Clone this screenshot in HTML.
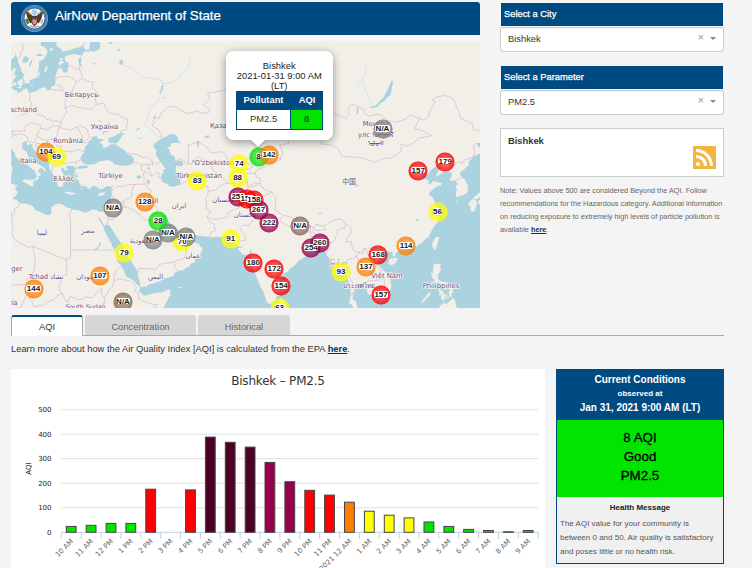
<!DOCTYPE html>
<html><head><meta charset="utf-8"><title>AirNow Department of State</title>
<style>
html,body{margin:0;padding:0}
body{width:752px;height:568px;overflow:hidden;background:#f4f4f4;font-family:"Liberation Sans",Arial,sans-serif;color:#333;position:relative}
.abs{position:absolute}
#hdr{left:11px;top:2px;width:469px;height:33px;background:#004a82;border-radius:3px 3px 0 0}
#hdr .t{left:44px;top:-2.6px;line-height:33px;font-size:13.33px;color:#fff;white-space:nowrap;-webkit-text-stroke:.25px #fff}
#map{left:11px;top:42px;width:469px;height:266px;background:#f2efe9;overflow:hidden}
.ph{left:501px;width:222px;height:23px;background:#004a82;color:#fff;font-size:9.33px;line-height:22.5px;text-indent:3px;white-space:nowrap;-webkit-text-stroke:.25px #fff}
.sel{left:500px;width:224px;height:25px;background:#fff;border:1px solid #ccc;border-radius:3px;box-sizing:border-box;font-size:9.33px;line-height:22px;color:#333;text-indent:7px;box-shadow:inset 0 1px 1px rgba(0,0,0,.06)}
#note{left:500px;top:184px;width:226px;font-size:7.33px;line-height:13px;color:#666;white-space:nowrap}
#note b,#learn b{color:#003366;text-decoration:underline}
.tab{top:315px;height:20px;box-sizing:border-box;font-size:9.33px;line-height:24px;text-align:center;color:#666;background:#d6d6d6;border-radius:3px 3px 0 0}
#learn{left:11px;top:343px;font-size:9.33px;line-height:12px;color:#333;white-space:nowrap}
#chart{left:11px;top:369px;width:534px;height:199px;background:#fff;overflow:hidden;font-family:"DejaVu Sans",Verdana,sans-serif}
.mk{position:absolute;width:20px;height:20px;border-radius:50%}
.ml{position:absolute;width:30px;height:8px;text-align:center;font-size:8px;line-height:8px;font-weight:bold;color:#111;white-space:nowrap}
.ml span{display:inline-block;background:#fff;border-radius:2px;padding:0 .5px;height:6.9px;line-height:7.6px;color:#1a1a1a}
#cc{left:556px;top:369px;width:168px;height:195px;box-sizing:border-box;border:1px solid #004a82;background:#f0f0f0}
</style></head><body>
<div id="hdr" class="abs"><svg class="abs" style="left:9px;top:2px" width="29" height="29" viewBox="-14.5 -14.5 29 29">
<circle r="13.5" fill="#b5b46a"/><circle r="12.9" fill="#2f6cb3"/><circle r="11.6" fill="none" stroke="#6f9bd0" stroke-width="1.4" stroke-dasharray="1 .8"/><circle r="10" fill="#fff"/><g transform="scale(1.12)">
<circle cx="0" cy="-5.6" r="2.6" fill="#a9d3e6"/>
<path d="M-1.5,-1 C-3,-5 -6,-6.5 -7.5,-5.5 C-7,-2 -6,2 -3.5,4.5 L-1,3 Z" fill="#5a3a17"/>
<path d="M1.5,-1 C3,-5 6,-6.5 7.5,-5.5 C7,-2 6,2 3.5,4.5 L1,3 Z" fill="#5a3a17"/>
<path d="M-2.2,-2.5 L2.2,-2.5 L2.2,5 L0,7 L-2.2,5 Z" fill="#5a3a17"/>
<path d="M-5.5,-6.5 L-4,-3.5 M5.5,-6.5 L4,-3.5" stroke="#c8b44e" stroke-width="1"/>
<path d="M-1.9,0.6 L1.9,0.6 L1.9,4 L0,5.6 L-1.9,4 Z" fill="#f08a8a"/>
<rect x="-1.9" y="-0.6" width="3.8" height="1.4" fill="#2f5fa8"/>
<ellipse cx="-6.6" cy="2.6" rx="1.5" ry="2.6" transform="rotate(-25 -6.6 2.6)" fill="#3f8a3f"/>
<path d="M-4,6.5 Q0,9 4,6.5" stroke="#999" stroke-width="1.2" fill="none"/>
<ellipse cx="6.6" cy="2.6" rx="1" ry="2.2" transform="rotate(25 6.6 2.6)" fill="#bbb"/>
</g></svg><div class="t abs">AirNow Department of State</div></div>
<div id="map" class="abs"><svg class="abs" style="left:0;top:0" width="469" height="266" viewBox="0 0 469 266">
<rect width="469" height="266" fill="#f2efe9"/>
<path d="M-9.0,109.7L-4.4,108.2L-1.8,106.1L1.7,107.9L3.6,110.8L4.3,113.9L6.6,116.4L9.3,118.4L11.2,120.0L13.8,122.2L16.1,122.5L18.4,124.5L19.5,125.5L21.4,127.4L23.7,128.4L24.5,130.9L25.6,133.3L26.0,134.5L24.7,135.2L23.9,137.6L24.1,138.4L25.6,138.5L27.5,136.2L27.3,134.3L29.8,133.3L29.4,131.4L27.1,129.9L27.5,127.9L28.7,126.5L29.8,126.0L32.5,127.2L32.9,128.7L34.4,129.4L34.8,127.9L32.9,125.2L29.1,123.2L25.2,121.2L24.9,120.5L26.0,119.0L23.0,119.0L20.3,117.4L17.6,114.9L16.1,110.8L13.5,108.4L11.6,107.1L11.0,103.9L11.6,102.9L11.2,100.7L14.2,99.4L16.7,99.4L15.7,100.5L16.1,102.3L17.3,103.9L18.8,101.3L21.1,102.9L22.2,106.6L24.9,109.7L27.0,110.8L29.8,113.3L33.2,115.4L35.5,116.4L37.4,118.7L38.6,120.0L38.4,122.0L38.2,125.5L38.6,126.9L40.5,129.9L41.6,131.8L43.3,133.5L44.6,136.4L46.9,136.4L51.5,137.9L47.7,137.2L45.4,138.6L46.5,141.9L46.9,143.8L49.6,145.2L51.1,143.8L52.6,145.4L51.9,141.0L51.1,140.5L53.8,141.2L52.6,138.6L54.5,138.6L55.9,139.8L56.1,137.2L58.0,138.1L56.4,135.2L53.0,133.3L51.9,131.8L53.0,132.3L51.5,130.4L50.3,128.4L50.5,126.0L51.7,125.5L53.4,127.2L53.2,128.7L54.5,127.4L55.7,128.7L57.2,127.7L55.3,126.5L54.9,124.7L57.2,123.7L59.9,123.7L62.9,124.2L63.5,125.5L66.3,125.5L64.0,128.2L64.0,128.7L63.7,130.9L66.7,130.9L65.9,131.8L66.7,133.8L66.3,134.8L67.5,136.0L64.8,135.0L64.4,136.9L67.1,137.9L68.0,138.4L67.8,140.0L68.6,141.2L68.6,142.9L72.0,142.6L68.6,144.5L71.3,144.0L72.0,143.8L74.3,144.3L75.1,144.5L77.0,146.6L80.0,146.4L80.8,143.8L83.8,144.0L86.1,145.2L88.4,147.1L89.3,147.4L93.3,146.1L96.0,143.8L98.6,144.7L99.8,145.0L101.3,143.3L102.1,143.3L102.1,144.7L100.5,146.1L100.9,147.5L100.4,149.9L100.9,152.6L100.5,154.7L99.4,157.2L98.3,160.8L97.5,162.1L96.6,165.5L95.4,167.9L94.5,168.8L92.9,169.7L90.3,169.7L88.4,169.9L87.2,168.9L85.3,167.9L82.7,167.5L80.0,168.1L78.1,169.2L74.7,170.8L72.0,169.9L68.0,168.6L63.3,167.7L60.2,167.7L59.5,165.9L55.5,165.4L52.2,163.0L50.5,162.3L46.5,161.6L42.7,163.3L40.7,165.3L40.3,168.8L40.8,170.8L38.9,172.7L37.4,173.3L33.6,172.1L27.5,169.2L23.7,167.9L22.4,164.4L18.8,162.8L14.6,161.7L10.4,161.6L8.1,160.6L6.6,159.0L5.9,157.6L2.8,157.2L2.4,155.4L5.3,153.3L6.6,151.2L6.4,149.9L5.5,148.5L4.7,147.5L4.3,145.7L6.6,143.6L6.4,142.6L3.8,143.8L3.2,141.9L1.9,141.4L-1.4,142.6L-3.7,143.1L-9.0,142.9Z M65.9,126.2L68.2,124.0L70.9,123.4L74.7,123.5L78.1,124.7L74.7,126.2L70.9,126.6L68.6,126.9Z M75.1,122.5L71.6,121.0L70.9,118.4L69.0,115.9L70.5,114.9L70.7,112.3L73.2,111.3L73.2,109.2L73.4,107.1L74.3,104.5L77.3,101.8L77.2,99.7L79.3,98.3L81.3,94.8L84.2,94.2L85.7,94.2L86.9,94.8L85.3,95.9L89.1,97.0L92.2,97.0L92.2,98.3L88.0,101.0L89.9,101.8L91.2,101.8L92.0,103.7L91.4,105.3L92.8,106.1L94.3,105.5L97.9,103.9L99.0,102.6L103.0,102.3L103.2,100.7L99.0,101.3L96.7,97.0L98.6,95.9L104.4,93.4L107.2,91.8L112.3,90.9L113.9,91.5L110.8,93.7L109.3,97.0L107.8,99.1L106.6,101.0L104.0,101.0L103.8,102.3L106.3,103.4L108.2,104.5L109.7,106.1L112.9,107.6L115.4,110.2L117.7,112.8L120.3,113.3L122.4,116.4L122.8,117.7L122.6,120.2L120.3,122.0L118.4,123.2L115.4,123.5L110.4,123.7L108.5,123.2L105.1,122.5L102.6,122.0L101.7,120.0L101.1,119.8L98.1,118.2L93.7,118.5L92.8,118.5L87.6,119.7L85.3,121.2L83.8,122.0L79.6,122.7L77.0,122.6Z M145.8,99.7L148.8,97.5L151.9,95.9L155.3,94.2L159.1,92.3L162.2,92.0L164.1,92.6L166.3,94.8L166.7,97.5L169.8,101.3L164.1,100.7L160.3,101.3L159.1,105.0L155.5,105.0L158.0,107.1L158.9,110.0L159.5,112.6L162.9,113.9L164.1,116.4L163.9,119.5L166.0,119.0L170.5,118.4L172.4,121.0L170.9,124.5L167.1,124.0L165.6,123.0L165.0,124.0L164.8,128.4L166.3,131.4L168.2,132.8L169.4,137.2L169.2,141.2L169.8,143.1L166.0,143.6L164.6,144.3L162.2,144.7L159.9,144.5L158.4,144.0L155.7,141.9L152.5,140.6L150.7,139.3L150.3,136.0L150.2,134.5L151.1,131.8L152.3,131.4L152.3,127.9L154.0,126.9L156.1,126.7L153.0,125.2L151.1,122.0L148.1,118.2L145.2,113.4L144.9,110.2L146.0,108.2L143.9,106.6L142.4,104.5L143.1,101.8Z M29.8,-2.6L45.8,-2.6L45.4,2.1L45.8,4.4L48.8,5.9L51.5,8.2L51.7,10.3L53.8,9.3L57.2,8.6L59.3,7.8L62.1,6.7L66.9,5.5L69.7,5.1L73.5,3.6L72.8,5.9L74.7,7.6L77.7,7.8L79.3,9.3L77.3,9.7L74.7,9.3L72.4,10.8L71.1,13.0L67.1,13.0L63.3,11.9L58.5,13.0L55.9,13.4L53.8,14.9L53.8,16.7L54.2,19.3L57.6,20.9L57.0,24.3L56.8,28.8L55.9,30.2L54.2,30.8L52.4,29.9L50.3,26.4L50.3,25.3L47.7,26.4L46.4,27.8L45.8,30.6L44.3,34.0L44.5,37.4L44.6,39.4L44.1,42.1L42.4,44.4L40.3,44.4L40.1,46.3L38.2,48.3L35.5,48.1L34.9,47.0L35.9,46.6L34.4,45.3L31.0,45.7L28.5,46.8L25.6,48.9L23.5,49.4L20.7,50.5L18.6,51.0L17.3,49.5L16.7,48.6L16.3,46.6L15.5,46.1L14.2,47.3L11.9,47.4L10.4,49.4L8.5,49.9L7.9,50.8L5.9,50.7L6.6,47.9L5.1,48.6L3.2,47.9L2.4,47.3L0.5,45.3L2.0,44.7L1.5,42.1L0.5,40.7L2.0,39.4L3.2,36.4L5.9,34.3L3.6,33.3L3.6,30.6L4.5,27.4L4.7,25.5L2.2,26.4L0.1,29.5L-2.9,29.7L-4.4,32.6L-4.8,37.4L-4.8,40.4L-3.5,40.9L-2.7,44.7L-2.9,48.6L-1.9,49.9L-1.8,51.1L-3.0,53.4L-4.0,53.1L-5.2,52.4L-12.8,52.4L-12.8,23.6L-8.8,23.6L-5.2,22.5L-2.1,20.3L0.1,17.4L2.6,16.0L4.3,13.4L4.7,9.7L5.1,13.4L6.0,14.9L6.9,16.9L7.2,21.1L9.7,25.7L10.4,28.5L11.0,29.9L13.3,33.0L11.7,35.4L12.7,37.0L13.8,40.1L13.2,41.5L14.4,41.6L16.9,41.3L19.0,40.4L18.8,37.9L20.3,37.4L23.7,36.4L25.2,36.0L26.6,33.0L27.0,28.7L27.7,25.3L28.3,22.1L27.5,19.3L29.1,18.9L31.3,17.8L32.7,17.1L34.4,14.1L36.3,11.2L36.3,8.2L34.4,6.3L32.7,4.4L29.8,3.8Z M150.7,270.3L153.0,265.0L154.0,262.7L156.1,258.9L157.8,255.1L159.9,253.4L158.9,250.5L159.4,248.1L157.4,247.6L151.5,250.2L146.9,250.8L143.9,250.7L140.5,252.1L135.5,253.5L131.7,253.2L129.7,250.0L128.5,249.0L126.4,249.0L129.1,247.6L129.1,245.6L127.0,243.6L124.1,240.5L121.1,237.4L118.8,236.2L116.5,235.5L114.4,233.5L113.5,230.0L111.2,224.9L110.4,223.3L107.8,221.3L106.4,219.7L105.9,217.7L105.9,212.1L104.7,208.0L100.9,204.2L100.5,200.3L99.4,199.9L97.1,195.4L94.8,191.1L93.5,188.4L93.1,186.3L91.8,183.3L90.3,181.6L88.6,178.4L87.4,176.2L88.2,174.7L88.8,176.2L90.3,178.6L92.2,182.1L94.7,184.3L94.8,183.5L95.7,181.0L96.3,178.8L97.4,176.5L97.2,177.6L96.6,181.0L95.9,182.9L98.3,183.1L100.2,185.9L103.0,190.6L106.1,195.5L109.1,199.5L112.7,204.8L113.3,210.1L117.5,215.5L120.6,219.6L122.6,223.3L126.2,228.4L127.2,231.9L126.8,234.7L127.7,236.6L128.7,240.1L128.9,242.4L129.6,245.0L131.7,245.1L135.5,244.5L138.2,242.2L142.0,241.7L146.6,239.7L148.3,239.7L151.2,237.7L153.0,236.8L159.3,235.1L162.9,233.3L162.9,231.2L166.3,229.4L170.1,228.0L172.4,228.2L174.3,226.2L178.5,224.3L179.6,221.7L184.2,220.1L183.8,217.5L184.2,214.9L186.5,214.5L187.8,212.7L190.3,210.5L191.9,205.9L190.8,205.7L188.4,202.9L187.3,201.4L184.6,201.1L180.2,198.3L178.7,195.2L178.4,193.1L179.3,190.3L178.3,190.7L177.2,192.4L174.6,194.6L171.3,197.8L167.9,199.2L164.4,199.0L161.2,199.7L159.5,197.4L160.6,195.7L160.4,194.5L160.4,192.8L159.1,190.9L157.5,194.1L157.4,196.8L155.4,193.0L155.1,189.7L153.4,187.3L150.4,184.8L148.8,181.4L146.9,177.3L146.0,177.2L147.3,176.2L149.2,174.9L151.5,172.5L155.1,174.3L157.7,179.0L159.5,183.7L162.3,183.8L164.4,185.4L167.5,188.4L173.1,189.2L175.8,188.6L178.4,186.6L181.0,187.3L181.6,189.5L184.1,193.0L188.8,194.1L194.9,194.6L201.4,195.2L205.8,194.7L210.2,194.9L215.4,193.8L217.3,194.1L219.1,196.5L220.7,199.7L223.0,201.1L224.9,201.5L225.7,203.1L228.1,204.7L231.8,204.2L230.8,205.8L227.1,206.1L226.7,207.0L229.1,209.5L232.0,212.5L234.3,213.3L236.7,212.5L238.6,211.3L239.0,209.0L240.3,206.8L240.3,209.3L240.7,211.7L241.3,214.5L241.3,220.3L242.0,224.1L243.2,228.0L245.1,234.1L246.2,236.6L249.0,244.1L252.6,250.3L254.3,255.3L255.6,259.4L257.0,261.0L259.3,262.4L261.6,259.7L265.2,257.9L265.0,256.1L266.0,254.0L268.1,254.0L268.1,252.2L268.1,247.7L269.8,243.3L269.2,240.5L269.2,238.0L269.0,234.3L272.1,232.9L273.0,231.3L277.4,229.6L277.3,228.2L281.2,225.2L284.4,222.7L287.4,219.0L290.8,216.9L294.0,215.0L295.1,212.9L295.3,210.3L297.2,209.6L299.4,209.5L302.9,209.3L305.1,208.8L307.8,208.4L308.6,207.6L309.7,206.4L311.2,205.8L313.5,206.8L314.2,210.3L315.4,212.7L317.7,215.5L320.2,218.4L321.9,220.7L323.2,222.3L324.1,225.6L322.6,231.9L324.5,232.5L326.4,232.9L328.3,231.9L330.6,230.0L333.1,226.6L335.6,230.0L336.3,234.9L337.5,239.5L337.9,241.7L339.4,245.7L339.4,249.4L339.8,253.2L339.2,255.1L338.4,258.9L338.2,263.1L338.8,262.2L339.4,261.4L340.5,262.6L342.0,265.0L343.6,267.3L344.7,270.3Z M346.6,270.3L347.0,265.8L345.7,262.7L345.3,260.8L344.5,258.9L344.2,258.2L342.2,258.2L341.8,256.5L341.8,253.2L343.0,250.5L343.9,248.2L344.6,245.3L344.9,243.0L346.6,241.7L348.3,242.2L348.0,243.9L348.1,245.0L349.6,245.0L351.9,245.1L354.4,247.1L355.9,249.0L356.5,250.9L358.0,252.7L360.7,253.0L361.8,253.7L364.0,255.1L363.0,258.2L362.7,260.5L364.9,259.9L366.6,258.2L368.3,257.4L369.8,255.9L370.6,254.0L371.6,253.8L375.5,251.6L378.5,250.1L378.9,249.2L379.7,247.8L379.7,246.5L380.6,244.0L380.1,243.2L379.8,240.6L379.3,237.4L378.5,235.3L376.0,231.6L374.0,229.8L369.9,226.1L369.2,224.3L367.3,222.7L366.6,221.1L367.1,217.1L369.6,214.9L370.6,212.9L371.7,212.3L375.0,210.1L377.4,209.0L379.3,210.3L381.2,209.5L381.8,210.9L381.6,213.3L383.3,215.1L384.8,214.1L384.3,212.9L384.3,211.3L385.8,210.5L387.7,210.1L390.1,209.0L393.4,208.6L396.2,207.4L396.4,205.0L398.7,206.8L400.2,205.4L403.1,205.0L405.9,204.6L408.2,202.5L410.5,201.1L413.5,198.0L415.8,196.1L417.7,194.9L419.2,191.5L420.4,189.0L421.9,186.5L424.0,183.3L426.8,180.1L428.0,178.0L428.7,174.9L426.8,174.3L424.9,173.2L424.2,172.7L426.1,171.2L428.3,170.6L426.5,168.4L428.0,167.0L426.1,164.4L424.2,162.8L424.2,161.2L422.7,157.9L421.9,155.4L418.7,153.3L417.7,151.9L419.0,150.3L422.1,147.3L424.2,145.4L426.8,144.0L429.9,143.6L431.0,141.0L428.7,140.5L426.1,140.3L423.6,139.0L421.9,139.8L420.4,141.2L418.1,142.1L417.0,141.4L418.1,139.3L415.4,137.6L413.2,136.7L412.0,135.2L412.2,133.3L413.3,132.3L416.6,132.6L419.2,128.8L424.0,125.0L424.9,124.2L428.0,124.0L428.9,125.2L428.6,127.2L426.5,130.4L425.7,132.3L425.1,134.7L426.8,133.8L428.4,133.1L432.2,130.1L437.1,129.2L438.6,130.4L440.5,130.6L440.5,134.8L438.4,137.6L440.9,139.5L442.4,138.1L444.7,139.5L445.9,140.7L446.8,143.1L444.1,143.8L445.5,146.1L445.7,147.7L445.1,150.3L444.9,153.1L445.6,155.4L448.5,154.2L450.2,153.5L452.7,152.9L455.2,151.7L456.5,149.9L457.1,147.5L456.6,142.9L454.8,139.3L453.5,137.2L449.1,132.6L449.9,129.4L451.9,128.4L455.7,125.1L457.6,123.5L458.0,119.6L459.9,117.2L461.5,116.9L461.8,115.1L464.5,113.3L466.0,112.8L467.5,111.8L477.8,111.8L477.8,270.3Z M358.8,64.7L360.5,66.2L366.9,64.8L369.4,61.2L373.2,59.3L375.9,55.6L378.7,54.3L380.1,50.5L381.2,44.0L382.3,39.4L380.1,39.1L377.8,45.3L375.1,50.5L372.5,55.6L368.7,59.3L364.9,63.3L363.1,63.9Z M243.5,99.7L245.1,97.0L246.6,93.4L249.6,92.9L251.5,94.2L255.3,94.5L258.0,94.0L261.8,93.4L265.6,94.2L264.8,95.9L261.8,95.9L258.4,95.6L255.3,95.9L251.5,95.9L249.6,97.5L248.1,101.3L246.2,102.9L244.3,102.3Z M185.9,99.7L186.9,98.0L188.0,99.1L187.8,102.9L187.1,106.1L186.3,105.0Z M193.3,94.8L195.2,93.4L197.9,93.7L198.7,95.1L196.4,95.9L194.5,95.9Z M254.2,116.4L257.2,114.9L262.2,115.1L261.0,117.2L257.2,117.7Z M125.3,135.2L126.8,133.3L129.8,133.5L130.2,135.7L127.9,136.7Z M135.5,138.6L136.7,136.7L138.6,138.6L138.6,141.9L136.7,142.4Z M135.5,125.5L136.7,125.5L137.8,127.4L136.7,127.4Z M78.1,8.2L78.9,0.5L81.9,-4.2L88.0,-2.6L89.5,4.4L88.0,7.8L84.2,9.3L82.3,9.7Z M95.6,-5.0L98.3,-9.0L103.2,-3.4L100.9,2.1L97.5,1.3Z M67.1,17.1L69.7,16.3L70.5,18.5L69.4,22.1L71.6,24.3L70.5,25.0L68.6,22.8L67.8,20.0Z M11.6,17.1L14.6,13.8L18.0,16.3L16.9,20.0L13.5,20.7L11.6,20.7Z M18.2,25.0L19.0,20.0L20.7,17.4L21.3,19.3L19.5,24.3Z M25.2,12.7L29.1,11.6L32.5,13.4L29.1,14.1L25.2,13.8Z M82.3,21.4L84.2,20.3L84.4,22.5L82.9,22.8Z M107.8,20.0L110.1,17.1L112.3,19.3L111.6,22.8L109.7,22.8Z M106.3,7.4L108.5,6.3L108.9,8.6L107.0,8.9Z M343.2,143.3L345.1,141.9L347.6,143.1L346.6,144.7L344.3,144.5Z M358.8,242.8L360.3,243.2L362.2,245.5L361.1,245.7Z M466.4,101.3L469.4,101.3L469.8,105.0L467.2,105.0Z M88.4,200.3L89.7,200.3L89.5,203.1L87.2,206.8L83.8,208.0L83.4,207.2L87.6,204.4Z M150.0,44.0L152.6,42.7L151.5,48.6L149.2,51.8L148.1,50.5L150.0,47.3Z M181.2,117.9L184.2,117.9L184.2,120.5L181.9,120.5Z M280.8,85.9L283.9,85.3L286.9,87.3L283.1,87.6Z M273.2,96.4L275.9,95.9L276.2,98.0L274.0,98.0Z M315.4,72.0L319.2,72.0L318.8,74.4L315.8,74.1Z M345.5,65.5L347.4,65.5L347.4,72.0L345.8,72.0Z M307.4,171.0L310.5,170.6L310.5,171.9L307.8,171.9Z M405.5,176.7L407.8,177.5L407.1,179.7L405.5,178.8Z M420.4,168.4L422.7,168.4L422.3,170.1L420.8,170.1Z M86.5,77.6L89.5,78.8L91.4,80.2L90.3,80.5L88.0,79.1Z M91.8,89.5L94.8,89.0L97.9,89.0L97.9,90.1L94.8,90.1L91.8,92.0L91.0,91.5Z M124.7,88.4L127.2,85.9L128.7,85.3L128.3,86.7L126.0,89.0Z M125.6,95.1L128.7,95.9L131.4,96.7L131.0,97.2L127.9,96.4L125.6,95.6Z" fill="#aad3df"/>
<path d="M-2.9,119.0L-2.3,115.6L-0.0,113.3L0.7,117.9L-0.4,121.5L-2.1,120.7Z M-4.4,125.5L-3.7,132.3L-1.8,133.8L0.7,132.6L1.7,126.0L-0.6,122.2L-3.7,124.0Z M11.7,139.1L11.9,138.1L15.2,137.2L17.6,138.1L21.4,137.4L23.7,136.8L22.2,140.5L22.6,142.9L21.8,144.5L19.2,143.8L15.9,141.5L12.5,140.3Z M54.0,149.9L56.4,149.6L60.0,150.6L62.3,150.8L64.4,151.0L64.0,152.2L61.4,152.4L58.5,152.5L54.0,151.0Z M87.2,152.6L87.2,151.7L89.5,151.2L89.9,150.6L92.4,150.6L96.0,148.9L93.5,150.8L93.9,152.3L92.2,153.1L89.9,154.1L87.6,153.5Z M69.7,146.8L71.6,145.4L71.3,147.1L70.1,148.0Z M62.7,132.3L64.8,131.5L65.6,133.1L63.7,133.4Z M62.9,135.5L63.8,135.5L63.7,137.2L62.9,136.9Z M6.6,39.4L9.3,37.7L11.2,36.7L12.3,38.1L12.1,40.4L11.2,42.7L10.4,44.4L8.9,43.7L7.0,42.7Z M1.5,41.1L3.6,39.9L5.5,41.4L5.1,43.7L2.8,43.7Z M6.2,45.0L9.7,44.4L10.6,45.7L9.5,46.6L6.2,46.0Z M20.3,42.7L21.1,42.1L22.0,43.4L21.4,44.0L20.3,43.5Z M26.8,35.7L27.3,31.9L29.2,28.1L28.7,31.9L27.3,36.0Z M33.2,28.5L35.5,23.9L36.8,24.3L36.1,27.8L34.0,31.0Z M47.5,21.4L48.8,19.6L51.9,18.9L53.0,20.3L50.7,22.1L48.4,23.9Z M48.3,17.1L50.3,15.8L52.1,17.4L50.3,18.5Z M38.6,7.4L40.5,5.9L42.4,7.0L41.2,8.9L39.3,8.6Z M268.6,255.9L269.6,255.8L271.7,257.9L273.3,260.6L275.1,263.8L275.7,266.5L275.1,268.4L270.9,270.5L269.4,270.2L268.1,266.8L267.6,261.8L268.1,259.1L269.0,256.8L268.4,256.1Z M377.6,219.7L378.7,217.3L379.7,216.5L383.9,215.9L386.3,216.1L386.5,217.5L384.6,220.9L380.8,223.3L377.8,222.1Z M426.7,194.5L428.4,195.7L426.8,199.9L426.1,203.6L424.0,208.4L421.9,205.6L421.1,203.6L421.5,200.7L423.4,197.4L424.6,195.5Z M423.0,221.9L424.6,221.7L429.1,222.1L429.5,222.5L429.1,226.4L430.3,227.6L426.7,232.9L427.0,236.8L429.5,239.3L433.3,240.1L435.6,240.5L435.0,243.0L436.4,245.3L434.5,244.0L431.8,241.7L429.9,241.7L430.6,242.8L427.6,240.1L424.8,241.1L423.0,240.1L423.0,238.6L424.4,237.4L422.9,236.8L422.5,238.0L421.9,236.4L420.4,233.9L420.0,230.4L421.9,231.7L421.9,229.6L422.3,225.8Z M421.9,241.9L424.9,241.7L426.7,244.8L425.3,246.7L423.8,244.8Z M437.1,245.3L440.9,245.3L442.6,250.9L439.8,251.1L438.6,248.2Z M437.3,249.8L439.8,250.1L440.7,254.4L438.8,255.1Z M428.0,247.8L431.8,249.2L432.7,250.5L430.6,253.4L428.4,253.4Z M429.9,255.1L432.2,251.7L434.3,252.1L432.9,258.6L430.6,257.4Z M433.5,257.2L434.5,254.0L436.2,250.3L436.0,253.6L434.3,257.0Z M435.2,255.7L437.1,254.6L438.3,255.9L436.0,256.7Z M410.1,261.2L410.5,259.7L413.2,256.3L416.2,252.8L418.1,249.8L419.6,251.3L418.5,253.6L415.8,256.3L413.2,258.9L411.6,260.8Z M432.7,245.3L435.0,246.5L436.2,247.8L434.1,247.5Z M428.0,266.9L429.1,263.1L431.4,262.4L433.7,260.1L435.2,262.4L437.1,260.5L439.0,258.9L441.7,255.9L444.0,257.8L444.7,262.0L445.9,265.4L444.3,270.3L428.4,270.3Z M457.6,161.2L458.8,159.0L462.2,157.0L465.3,158.5L466.0,161.2L464.1,168.4L461.5,170.1L459.6,168.8L459.6,164.4L457.6,163.0Z M462.2,156.7L462.6,154.9L465.3,153.5L468.7,150.3L477.8,149.4L477.8,154.9L468.3,155.4L466.4,157.2L463.7,157.0Z M466.4,161.2L468.3,158.1L470.2,156.7L477.8,155.8L477.8,159.0L470.2,162.6L468.7,162.1Z M444.1,159.9L445.5,158.8L447.2,159.2L445.9,160.3Z M455.7,156.0L456.7,153.5L456.9,155.4Z M167.1,245.3L169.8,244.8L171.9,245.3L169.0,246.3Z M156.3,190.7L156.8,190.5L156.8,192.2L156.5,192.2Z M174.7,189.0L178.1,187.6L178.5,187.8L177.0,188.8Z M187.3,213.7L188.6,213.3L187.8,215.3Z" fill="#f2efe9"/>
<path d="M18.6,51.1L19.2,55.0L18.0,57.8L20.1,59.6L20.5,62.7L19.9,64.2L21.4,67.3L20.7,69.8 M10.4,73.2L11.9,72.6L15.7,70.9L20.7,69.8L23.0,70.3L26.4,71.2L28.7,73.8L31.7,73.2L34.9,75.6L36.1,77.9L38.6,77.6L40.8,79.6L44.3,78.5L50.2,80.3 M50.2,80.3L50.7,77.3L54.2,72.6L56.1,70.0L54.2,66.1L54.2,62.4L52.6,61.2L55.3,58.7L53.8,50.8L51.1,48.3L39.7,47.6 M53.8,50.8L57.2,51.1L61.4,49.2L62.5,45.0L65.6,39.6L71.5,36.4L76.2,39.1L81.9,40.1L81.5,45.3L88.8,54.0L84.2,55.6L85.3,62.4L80.8,67.3L75.8,66.7L67.8,65.5L60.6,63.3L54.2,66.1 M44.5,36.9L48.1,34.7L59.1,34.7L65.6,39.6 M51.1,48.3L51.1,44.7L48.1,43.4L45.4,42.4 M57.0,24.5L60.6,23.6L65.2,27.1L68.4,26.7L69.0,21.4L68.8,17.1L71.1,13.0 M68.4,26.7L70.3,31.6L71.5,36.4 M85.3,62.4L92.9,60.9L95.2,67.6L99.0,71.5L106.8,72.3L112.5,76.2L117.1,77.3L115.8,83.1L115.4,87.3L110.1,89.0L109.7,91.5 M50.2,80.3L48.6,84.2L51.5,86.5L59.1,88.1L65.6,85.1L69.9,83.9L75.3,86.7L78.9,95.3L71.6,100.5L71.6,94.2L65.6,85.1 M71.6,100.5L77.2,101.0 M48.6,84.2L45.0,95.3L41.4,97.0L45.8,103.9L49.8,104.5L50.7,107.1L51.7,108.9 M51.7,108.9L61.0,110.0L67.1,107.4L73.0,109.5 M51.7,108.9L49.4,116.7L51.9,121.7L57.6,121.0L64.6,120.0L65.6,121.7L64.6,123.7 M64.6,120.0L69.0,118.4L70.9,118.4 M16.5,99.7L22.6,100.5L26.8,94.5L25.6,92.9L29.6,86.5L28.9,83.1L21.4,80.8L16.9,82.2L12.9,85.9L13.8,89.3L4.1,89.0L0.9,89.3L0.5,91.8L4.1,92.9L10.8,91.8L16.5,94.8L16.5,99.7 M29.6,86.5L35.9,87.6L42.4,83.6L48.6,84.2 M25.6,92.9L26.8,94.5L31.7,97.8L36.3,98.0L41.4,97.0 M36.3,98.0L36.7,103.7L38.2,103.4L37.0,106.6L38.9,112.3L34.6,115.9 M24.3,101.8L25.2,104.5L31.3,113.3L34.6,115.9 M24.3,101.8L28.7,101.5L36.7,103.7 M38.9,112.3L41.8,114.1L42.7,119.0L42.2,120.7L40.5,129.9 M42.7,119.0L49.4,116.7 M42.2,123.5L44.3,124.2L51.5,121.7L51.9,121.7 M0.3,45.3L-2.9,44.7 M7.9,16.3L9.3,14.1L9.7,10.1L11.9,8.2L12.3,5.1L11.0,1.3 M70.1,4.8L74.7,-0.3L78.5,-5.8 M-3.7,88.7L0.9,89.3 M-3.7,95.1L-0.2,94.8L4.1,92.9 M60.0,167.3L58.3,173.6L59.5,177.7L59.5,208.0L104.7,208.0 M59.5,208.0L59.5,216.1L55.7,216.1L55.7,218.1L21.4,204.0L18.4,205.6L9.9,201.8L3.6,197.4L0.1,190.7L2.0,187.8L1.5,181.8L0.7,173.5L3.6,170.6L3.6,167.0L8.3,163.7L8.1,160.6 M0.7,173.5L-1.2,165.3L-4.0,163.5L-7.1,157.6 M21.4,204.0L23.3,212.1L24.3,216.5L23.3,228.4L16.1,237.8L16.1,240.9L11.9,243.2L5.1,242.4L-1.4,244.4L-5.9,242.4 M55.7,218.1L55.7,233.1L51.9,233.5L50.0,239.0L48.4,243.6L47.7,245.1L50.0,251.3L51.5,251.7L46.9,253.2L42.4,258.2L36.7,259.7L32.9,263.1L27.5,263.9L23.3,264.6L21.4,260.1L17.6,255.5L23.0,255.1L21.4,251.3L19.9,246.7L18.0,243.6L16.1,240.9 M18.0,243.6L16.9,250.9L13.5,257.4L10.0,264.6L7.4,268.4 M51.5,251.7L54.5,258.9L56.4,260.1L59.5,254.0L65.2,257.0L70.9,257.4L74.7,255.1L81.5,256.1L87.6,248.6L90.7,246.7L90.3,252.4L93.3,257.0L94.1,260.5L89.9,263.5 M56.4,260.1L60.6,265.4L64.8,268.1 M93.3,257.0L94.8,252.8L97.1,251.7L97.9,248.2L101.7,244.8L103.2,238.6L103.0,235.5L105.1,228.0L111.2,224.1 M103.2,238.6L108.5,236.6L112.7,237.4L119.6,239.3L125.6,245.5L123.2,249.4L127.5,251.4L128.9,249.5 M127.5,251.4L127.9,257.0L131.7,258.9L143.1,262.7L146.9,262.7L139.3,270.3 M94.1,260.5L93.7,261.2L89.9,263.5L95.6,267.7L98.6,272.2 M94.7,168.8L97.1,176.7 M99.8,160.1L99.6,163.9L99.4,167.9L97.5,176.4 M97.4,177.3L101.6,178.0L103.2,176.7L104.2,175.1L107.0,174.5L107.7,173.0L105.1,167.9L112.7,165.7L113.5,165.0L112.0,159.6L104.4,164.4L100.4,162.4 M112.0,159.6L120.3,154.9L121.1,149.4L121.8,145.2L125.5,142.4L119.2,142.4L112.7,144.3L105.1,144.5L103.8,146.4L101.9,148.2L100.9,148.0 M97.9,160.8L100.7,159.4L103.6,155.8L101.3,153.8 M125.5,142.4L134.8,142.1L136.7,146.1L140.3,148.5L138.0,153.5L137.2,157.0L139.9,160.8L144.5,163.7L146.4,166.8L145.8,170.1L146.9,172.5L149.0,174.7 M113.5,165.0L118.0,165.9L124.5,169.7L134.4,178.0L141.4,178.4L144.9,174.5L146.9,174.5 M141.4,178.4L144.9,178.8L145.8,180.8L148.5,180.7 M127.2,230.4L128.7,226.4L132.1,226.4L142.0,227.0L145.0,227.6L147.7,223.3L151.1,221.7L162.2,220.1L173.6,216.1L176.0,208.0L174.3,205.2L164.4,204.2L160.6,199.4 M174.3,205.2L176.4,199.0L177.4,196.1L178.7,195.9 M162.2,220.1L166.3,229.4 M157.6,196.8L159.1,197.4 M122.4,120.9L127.2,120.7L129.6,123.0L130.8,125.0L130.2,127.9L134.8,129.9L133.3,131.4L131.9,131.6L133.6,136.7L132.5,138.6L134.8,142.1 M116.5,111.3L126.0,112.3L131.4,115.4L136.3,114.9L140.9,119.0L144.3,122.0L146.6,122.5L149.2,119.2 M140.9,119.0L141.6,123.0L135.5,122.0L129.6,123.0 M135.5,122.0L137.8,124.5L139.3,129.9L141.4,133.9 M134.8,129.9L139.3,133.8L141.4,133.9L146.2,129.9L148.3,131.4L146.9,134.3L150.3,136.0 M169.4,141.2L172.8,140.7L177.4,137.6L181.9,136.9L186.5,139.8L189.9,140.5L194.1,144.5L197.0,144.5L197.1,149.4L196.8,153.1L194.5,156.3L194.5,158.3L196.0,159.0L194.9,164.8L195.8,167.9L199.0,168.4L199.6,169.9L195.9,175.1L199.8,180.7L203.2,182.0L203.2,186.3L205.1,186.7L204.7,188.8L199.6,190.5L198.7,194.9 M197.1,149.4L204.4,148.2L210.8,142.4L217.3,141.2L222.2,141.9L227.9,142.4L231.2,140.3L231.8,138.1L235.7,136.9L236.7,138.6L236.1,144.3L240.5,142.9L243.2,140.7L249.2,141.7 M247.9,142.7L242.0,144.5L236.9,145.7L235.2,147.3L236.7,150.3L234.8,153.5L234.8,156.5L230.6,156.7L230.2,160.8L228.7,161.0L227.9,166.2L223.0,167.5L216.9,170.6L216.7,175.1L208.2,177.1L202.1,177.1L195.9,175.1 M223.8,201.1L225.9,198.6L229.5,199.0L234.4,198.2L234.0,192.8L231.0,189.5L228.7,187.3L232.5,183.1L237.8,183.5L241.6,178.8L245.4,174.5L248.1,169.7L247.7,166.2L250.8,164.4L248.5,162.1L245.8,160.3L245.4,154.5L252.7,154.0L257.2,152.2L260.3,149.9 M249.2,141.7L249.6,142.9L253.4,147.5L260.3,149.9L264.8,155.4L264.5,160.3L264.8,163.9L263.7,167.9L265.6,169.2L272.4,173.6L277.0,174.1L283.5,177.5L288.0,180.5L291.5,183.1L299.4,183.5L302.5,186.1L305.1,182.5L312.8,184.0L319.2,180.1L323.8,178.0L330.2,177.1L334.8,182.2 M272.4,173.6L269.6,176.2L269.0,179.7L273.6,182.2L281.2,185.9L286.5,186.5L290.7,189.0L295.3,189.9L299.4,189.9L299.6,183.5 M302.5,186.1L302.5,187.3L306.1,188.6L314.7,188.0L312.8,184.0 M334.8,182.2L333.3,186.9L330.2,186.1L326.4,188.6L326.1,191.5L324.2,194.9L324.5,197.0L322.3,200.5L319.6,199.7L319.2,204.0L318.5,207.2L316.6,208.1L315.0,210.9L315.4,213.1 M303.1,207.6L301.9,203.1L299.8,198.2L299.4,196.1L300.6,194.9L299.4,192.0L301.0,189.7L304.0,191.5L306.1,192.6L305.9,194.5L314.3,194.9L315.8,196.1L311.2,199.4L311.2,201.9L312.8,204.2L315.4,201.1L316.6,208.1 M334.8,182.2L339.8,184.8L339.8,192.0L335.4,197.0L335.4,200.3L340.5,199.4L339.8,203.1L342.8,204.4L341.7,207.4L345.1,210.3L349.1,209.9L351.4,211.5L352.9,206.4L359.7,206.0L364.9,202.7L370.2,204.4L370.2,208.0L375.0,210.1 M349.1,209.9L345.1,214.7L340.9,216.9L336.3,217.7L334.6,221.9L336.3,225.6L339.4,231.5L337.9,235.1L341.5,240.5L341.7,245.0L343.4,248.2L339.9,253.8 M345.1,214.7L346.8,215.5L346.6,218.1L349.6,217.9L348.5,225.6L352.7,223.3L354.6,224.3L357.6,222.5L362.6,226.0L362.8,230.0L365.8,233.3L366.0,238.4L364.5,238.6L356.1,239.0L354.4,241.3L353.6,241.5L355.7,248.8 M352.9,206.4L356.1,210.1L356.5,212.5L362.2,213.7L360.3,217.7L364.5,221.7L369.6,228.2L373.2,235.8L373.4,237.0L366.0,238.4 M373.4,237.0L373.2,245.9L367.5,248.6L366.8,251.3L364.1,251.5L361.6,253.5 M298.3,79.8L306.7,87.0L310.5,94.2L310.1,101.8L320.0,103.1L327.2,106.6L331.0,114.6L344.7,115.1L351.5,115.9L363.7,120.5L373.2,116.2L380.1,116.2L390.0,109.7L390.1,102.3L396.4,104.2L405.2,99.1L407.8,95.9L419.6,94.2L420.4,93.4L410.9,88.4L404.0,87.0L408.2,75.9 M298.3,79.8L305.5,75.6L315.4,70.3L323.0,71.7L334.4,76.4L338.2,72.0L337.1,66.4L340.9,62.4L353.1,67.3L353.4,71.5L358.8,74.1L365.2,72.3L370.2,72.9L377.0,78.8L385.4,79.9L394.5,77.3L399.1,73.2L408.2,75.9L412.4,77.9L417.7,75.0L418.1,71.5L423.8,59.9L421.1,58.4L425.3,55.0L434.5,53.4L442.1,56.5L449.3,73.5L449.3,76.2L461.1,81.4L462.4,88.1L468.3,88.1L476.7,84.8L470.6,102.3L466.0,101.3L462.6,103.9L463.7,111.3L461.1,116.2 M437.3,128.4L443.6,123.5L447.0,119.5L451.2,121.5L452.3,118.4L457.6,116.2L461.1,116.2 M444.0,139.3L447.4,136.7L452.5,135.2 M249.2,141.7L249.1,136.0L245.1,135.2L244.5,131.1L245.8,128.2L251.9,125.5L256.9,123.5L262.6,121.5L269.6,117.4L269.4,114.4L271.7,112.6L270.2,105.0L268.3,103.4L275.9,101.8L278.1,101.8L277.4,99.9L280.0,90.9L289.6,91.8L290.5,84.2L296.4,80.2L298.3,79.8 M296.4,80.2L292.2,77.9L288.4,77.3L280.0,69.7L269.0,70.3L260.7,55.0L255.3,50.5L247.3,53.7L243.5,50.8L235.2,49.9L234.0,42.1L226.8,41.4L212.4,48.3L200.2,50.5L196.4,50.8L198.7,56.8L192.6,63.0L199.0,67.6L197.9,70.3L190.7,71.7L187.3,68.8L176.2,71.7L171.7,69.1L163.3,64.5L157.6,64.8L149.6,71.5L148.5,75.9L142.8,75.9L144.3,73.2L142.4,78.8L143.3,79.9L141.2,84.2L143.5,85.1L147.3,87.9L150.7,93.4L148.8,94.5L151.5,95.6 M163.9,119.7L169.8,116.7L173.4,119.0L175.3,122.0L177.4,122.0L177.4,102.9L187.3,99.9L196.4,106.1L200.2,110.8L211.2,109.7L215.8,113.6L215.4,116.4L217.3,119.0L217.5,122.5L222.8,122.7L223.4,124.5L226.8,121.7L232.5,118.2L234.4,117.2L243.9,116.2L244.3,113.1L247.0,112.3L252.7,113.9L265.6,114.6L269.6,117.4 M177.4,122.0L181.2,122.0L181.6,119.0L187.3,114.9L192.6,117.4L193.0,121.5L199.8,123.0L202.1,128.4L208.9,133.5L217.3,141.2 M222.2,141.9L223.4,138.1L224.5,137.2L221.9,130.4L225.3,130.4L227.9,127.4L232.5,128.4L232.9,127.2L234.4,127.2L237.1,127.7L242.0,124.5L236.7,121.0L232.5,121.5L234.4,117.2 M244.5,131.1L237.5,131.8L230.6,130.6L227.9,128.4" fill="none" stroke="#b88fb8" stroke-opacity=".55" stroke-width=".7" stroke-linejoin="round"/>
<path d="M152.6,54.3L154.9,55.6L148.8,56.2L144.3,61.8L139.3,65.8L137.1,74.4L133.8,82.5L139.3,87.0L143.9,91.5L147.1,95.6 M151.9,41.7L156.5,41.4L163.3,39.4L169.4,36.0L169.8,32.6L175.5,27.1L178.1,23.6L179.3,16.3 M112.3,22.8L119.9,26.4L124.1,27.8L128.7,33.3L131.7,35.4L139.3,36.7L145.0,36.7L151.1,38.7L151.5,42.7 M361.1,61.2L358.4,57.5L356.5,53.1L354.6,47.9L352.3,42.7L351.2,36.7L353.4,33.3L354.6,28.5L355.0,23.6 M351.2,36.7L347.7,40.1L345.8,44.0" fill="none" stroke="#aad3df" stroke-opacity=".55" stroke-width=".8" stroke-linejoin="round"/>
<g font-family="DejaVu Sans, Noto Sans CJK SC, sans-serif" fill="#6b5079" stroke="#f7f4f0" stroke-width="1.6" paint-order="stroke" stroke-linejoin="round">
<text x="70.5" y="54.7" font-size="6.8" text-anchor="middle">Беларусь</text>
<text x="25.8" y="70.2" font-size="6.8" text-anchor="end">Deutschland</text>
<text x="93.5" y="87.0" font-size="6.8" text-anchor="middle">Україна</text>
<text x="57.0" y="100.9" font-size="6.8" text-anchor="middle">România</text>
<text x="17.3" y="121.2" font-size="6.8" text-anchor="middle">Italia</text>
<text x="53.0" y="139.4" font-size="6.8" text-anchor="middle">Ελλάς</text>
<text x="99.5" y="135.7" font-size="6.8" text-anchor="middle">Türkiye</text>
<text x="203.5" y="123.2" font-size="6.8" text-anchor="middle">O'zbekiston</text>
<text x="188.0" y="135.9" font-size="6.8" text-anchor="middle">Türkmenistan</text>
<text x="168.0" y="166.4" font-size="6.8" text-anchor="middle">ایران</text>
<text x="138.0" y="161.4" font-size="6.8" text-anchor="middle">العراق</text>
<text x="131.5" y="200.9" font-size="6.8" text-anchor="middle">السعودية</text>
<text x="77.0" y="190.9" font-size="6.8" text-anchor="middle">مصر</text>
<text x="31.0" y="192.7" font-size="6.8" text-anchor="middle">ليبيا</text>
<text x="144.5" y="236.9" font-size="6.8" text-anchor="middle">اليمن</text>
<text x="182.0" y="216.4" font-size="6.8" text-anchor="middle">عمان</text>
<text x="215.0" y="160.4" font-size="6.8" text-anchor="middle">افغانستان</text>
<text x="234.0" y="175.4" font-size="6.8" text-anchor="middle">پاکستان</text>
<text x="35.0" y="236.7" font-size="6.8" text-anchor="middle">Tchad تشاد</text>
<text x="77.0" y="236.9" font-size="6.8" text-anchor="middle">السودان</text>
<text x="74.5" y="267.0" font-size="6.3" text-anchor="middle">South Sudan</text>
<text x="11.5" y="228.7" font-size="6.8" text-anchor="end">Niger</text>
<text x="6.5" y="262.7" font-size="6.8" text-anchor="end">Nigeria</text>
<text x="338.0" y="142.4" font-size="6.8" text-anchor="middle" font-family="Liberation Sans, Noto Sans CJK SC, sans-serif">中国</text>
<text x="376.0" y="236.2" font-size="6.8" text-anchor="middle">Việt Nam</text>
<text x="348.0" y="246.3" font-size="6.8" text-anchor="middle" textLength="32" lengthAdjust="spacingAndGlyphs">ประเทศไทย</text>
<text x="430.0" y="245.7" font-size="6.8" text-anchor="middle">Philippines</text>
<text x="328.0" y="223.2" font-size="6.2" text-anchor="middle" textLength="18" lengthAdjust="spacingAndGlyphs">မြန်မာ</text>
<text x="365.0" y="83.8" font-size="6.8" text-anchor="middle">Монгол</text>
<text x="365.0" y="94.6" font-size="6.8" text-anchor="middle" textLength="36" lengthAdjust="spacingAndGlyphs">улс ᠮᠣᠩᠭᠣᠯ</text>
<text x="365.0" y="104.2" font-size="6.8" text-anchor="middle" textLength="16" lengthAdjust="spacingAndGlyphs">ᠤᠯᠤᠰ</text>
<text x="217.5" y="86.4" font-size="6.8" text-anchor="middle">Қазақстан</text>
</g>
</svg>
<div class="mk" style="left:25.0px;top:99.5px;background:radial-gradient(circle closest-side,rgba(255,126,0,.63) 45%,rgba(255,126,0,.8) 86%,rgba(255,126,0,.78) 92%,rgba(255,126,0,0) 100%)"></div>
<div class="mk" style="left:35.6px;top:105.1px;background:radial-gradient(circle closest-side,rgba(255,255,0,.63) 45%,rgba(255,255,0,.8) 86%,rgba(255,255,0,.78) 92%,rgba(255,255,0,0) 100%)"></div>
<div class="mk" style="left:91.8px;top:155.8px;background:radial-gradient(circle closest-side,rgba(128,128,128,.63) 45%,rgba(128,128,128,.8) 86%,rgba(128,128,128,.78) 92%,rgba(128,128,128,0) 100%)"></div>
<div class="mk" style="left:161.3px;top:190.0px;background:radial-gradient(circle closest-side,rgba(255,255,0,.63) 45%,rgba(255,255,0,.8) 86%,rgba(255,255,0,.78) 92%,rgba(255,255,0,0) 100%)"></div>
<div class="mk" style="left:165.3px;top:185.0px;background:radial-gradient(circle closest-side,rgba(128,128,128,.63) 45%,rgba(128,128,128,.8) 86%,rgba(128,128,128,.78) 92%,rgba(128,128,128,0) 100%)"></div>
<div class="mk" style="left:132.0px;top:187.5px;background:radial-gradient(circle closest-side,rgba(128,128,128,.63) 45%,rgba(128,128,128,.8) 86%,rgba(128,128,128,.78) 92%,rgba(128,128,128,0) 100%)"></div>
<div class="mk" style="left:146.9px;top:181.2px;background:radial-gradient(circle closest-side,rgba(128,128,128,.63) 45%,rgba(128,128,128,.8) 86%,rgba(128,128,128,.78) 92%,rgba(128,128,128,0) 100%)"></div>
<div class="mk" style="left:137.3px;top:168.5px;background:radial-gradient(circle closest-side,rgba(0,228,0,.63) 45%,rgba(0,228,0,.8) 86%,rgba(0,228,0,.78) 92%,rgba(0,228,0,0) 100%)"></div>
<div class="mk" style="left:123.7px;top:150.2px;background:radial-gradient(circle closest-side,rgba(255,126,0,.63) 45%,rgba(255,126,0,.8) 86%,rgba(255,126,0,.78) 92%,rgba(255,126,0,0) 100%)"></div>
<div class="mk" style="left:103.3px;top:200.5px;background:radial-gradient(circle closest-side,rgba(255,255,0,.63) 45%,rgba(255,255,0,.8) 86%,rgba(255,255,0,.78) 92%,rgba(255,255,0,0) 100%)"></div>
<div class="mk" style="left:78.9px;top:224.1px;background:radial-gradient(circle closest-side,rgba(255,126,0,.63) 45%,rgba(255,126,0,.8) 86%,rgba(255,126,0,.78) 92%,rgba(255,126,0,0) 100%)"></div>
<div class="mk" style="left:12.5px;top:237.0px;background:radial-gradient(circle closest-side,rgba(255,126,0,.63) 45%,rgba(255,126,0,.8) 86%,rgba(255,126,0,.78) 92%,rgba(255,126,0,0) 100%)"></div>
<div class="mk" style="left:102.0px;top:249.5px;background:radial-gradient(circle closest-side,rgba(140,104,70,.63) 45%,rgba(140,104,70,.8) 86%,rgba(140,104,70,.78) 92%,rgba(140,104,70,0) 100%)"></div>
<div class="mk" style="left:176.3px;top:129.1px;background:radial-gradient(circle closest-side,rgba(255,255,0,.63) 45%,rgba(255,255,0,.8) 86%,rgba(255,255,0,.78) 92%,rgba(255,255,0,0) 100%)"></div>
<div class="mk" style="left:218.2px;top:112.0px;background:radial-gradient(circle closest-side,rgba(255,255,0,.63) 45%,rgba(255,255,0,.8) 86%,rgba(255,255,0,.78) 92%,rgba(255,255,0,0) 100%)"></div>
<div class="mk" style="left:216.6px;top:125.7px;background:radial-gradient(circle closest-side,rgba(255,255,0,.63) 45%,rgba(255,255,0,.8) 86%,rgba(255,255,0,.78) 92%,rgba(255,255,0,0) 100%)"></div>
<div class="mk" style="left:209.8px;top:186.7px;background:radial-gradient(circle closest-side,rgba(255,255,0,.63) 45%,rgba(255,255,0,.8) 86%,rgba(255,255,0,.78) 92%,rgba(255,255,0,0) 100%)"></div>
<div class="mk" style="left:217.1px;top:144.8px;background:radial-gradient(circle closest-side,rgba(153,0,76,.63) 45%,rgba(153,0,76,.8) 86%,rgba(153,0,76,.78) 92%,rgba(153,0,76,0) 100%)"></div>
<div class="mk" style="left:226.2px;top:147.2px;background:radial-gradient(circle closest-side,rgba(255,0,0,.63) 45%,rgba(255,0,0,.8) 86%,rgba(255,0,0,.78) 92%,rgba(255,0,0,0) 100%)"></div>
<div class="mk" style="left:232.9px;top:148.1px;background:radial-gradient(circle closest-side,rgba(255,0,0,.63) 45%,rgba(255,0,0,.8) 86%,rgba(255,0,0,.78) 92%,rgba(255,0,0,0) 100%)"></div>
<div class="mk" style="left:237.5px;top:158.4px;background:radial-gradient(circle closest-side,rgba(153,0,76,.63) 45%,rgba(153,0,76,.8) 86%,rgba(153,0,76,.78) 92%,rgba(153,0,76,0) 100%)"></div>
<div class="mk" style="left:248.1px;top:171.0px;background:radial-gradient(circle closest-side,rgba(153,0,76,.63) 45%,rgba(153,0,76,.8) 86%,rgba(153,0,76,.78) 92%,rgba(153,0,76,0) 100%)"></div>
<div class="mk" style="left:237.5px;top:104.5px;background:radial-gradient(circle closest-side,rgba(0,228,0,.63) 45%,rgba(0,228,0,.8) 86%,rgba(0,228,0,.78) 92%,rgba(0,228,0,0) 100%)"></div>
<div class="mk" style="left:248.1px;top:102.9px;background:radial-gradient(circle closest-side,rgba(255,126,0,.63) 45%,rgba(255,126,0,.8) 86%,rgba(255,126,0,.78) 92%,rgba(255,126,0,0) 100%)"></div>
<div class="mk" style="left:361.5px;top:77.3px;background:radial-gradient(circle closest-side,rgba(128,128,128,.63) 45%,rgba(128,128,128,.8) 86%,rgba(128,128,128,.78) 92%,rgba(128,128,128,0) 100%)"></div>
<div class="mk" style="left:397.2px;top:118.5px;background:radial-gradient(circle closest-side,rgba(255,0,0,.63) 45%,rgba(255,0,0,.8) 86%,rgba(255,0,0,.78) 92%,rgba(255,0,0,0) 100%)"></div>
<div class="mk" style="left:424.3px;top:109.6px;background:radial-gradient(circle closest-side,rgba(255,0,0,.63) 45%,rgba(255,0,0,.8) 86%,rgba(255,0,0,.78) 92%,rgba(255,0,0,0) 100%)"></div>
<div class="mk" style="left:416.5px;top:160.1px;background:radial-gradient(circle closest-side,rgba(255,255,0,.63) 45%,rgba(255,255,0,.8) 86%,rgba(255,255,0,.78) 92%,rgba(255,255,0,0) 100%)"></div>
<div class="mk" style="left:385.1px;top:194.3px;background:radial-gradient(circle closest-side,rgba(255,126,0,.63) 45%,rgba(255,126,0,.8) 86%,rgba(255,126,0,.78) 92%,rgba(255,126,0,0) 100%)"></div>
<div class="mk" style="left:357.3px;top:202.7px;background:radial-gradient(circle closest-side,rgba(255,0,0,.63) 45%,rgba(255,0,0,.8) 86%,rgba(255,0,0,.78) 92%,rgba(255,0,0,0) 100%)"></div>
<div class="mk" style="left:345.0px;top:215.1px;background:radial-gradient(circle closest-side,rgba(255,126,0,.63) 45%,rgba(255,126,0,.8) 86%,rgba(255,126,0,.78) 92%,rgba(255,126,0,0) 100%)"></div>
<div class="mk" style="left:360.1px;top:242.9px;background:radial-gradient(circle closest-side,rgba(255,0,0,.63) 45%,rgba(255,0,0,.8) 86%,rgba(255,0,0,.78) 92%,rgba(255,0,0,0) 100%)"></div>
<div class="mk" style="left:319.9px;top:219.7px;background:radial-gradient(circle closest-side,rgba(255,255,0,.63) 45%,rgba(255,255,0,.8) 86%,rgba(255,255,0,.78) 92%,rgba(255,255,0,0) 100%)"></div>
<div class="mk" style="left:290.3px;top:196.1px;background:radial-gradient(circle closest-side,rgba(153,0,76,.63) 45%,rgba(153,0,76,.8) 86%,rgba(153,0,76,.78) 92%,rgba(153,0,76,0) 100%)"></div>
<div class="mk" style="left:298.8px;top:190.8px;background:radial-gradient(circle closest-side,rgba(153,0,76,.63) 45%,rgba(153,0,76,.8) 86%,rgba(153,0,76,.78) 92%,rgba(153,0,76,0) 100%)"></div>
<div class="mk" style="left:279.1px;top:174.2px;background:radial-gradient(circle closest-side,rgba(142,100,100,.63) 45%,rgba(142,100,100,.8) 86%,rgba(142,100,100,.78) 92%,rgba(142,100,100,0) 100%)"></div>
<div class="mk" style="left:232.2px;top:210.9px;background:radial-gradient(circle closest-side,rgba(255,0,0,.63) 45%,rgba(255,0,0,.8) 86%,rgba(255,0,0,.78) 92%,rgba(255,0,0,0) 100%)"></div>
<div class="mk" style="left:253.3px;top:216.8px;background:radial-gradient(circle closest-side,rgba(255,0,0,.63) 45%,rgba(255,0,0,.8) 86%,rgba(255,0,0,.78) 92%,rgba(255,0,0,0) 100%)"></div>
<div class="mk" style="left:260.3px;top:234.1px;background:radial-gradient(circle closest-side,rgba(255,0,0,.63) 45%,rgba(255,0,0,.8) 86%,rgba(255,0,0,.78) 92%,rgba(255,0,0,0) 100%)"></div>
<div class="mk" style="left:258.6px;top:256.0px;background:radial-gradient(circle closest-side,rgba(255,255,0,.63) 45%,rgba(255,255,0,.8) 86%,rgba(255,255,0,.78) 92%,rgba(255,255,0,0) 100%)"></div>
<div class="ml" style="left:20.0px;top:105.5px"><span>104</span></div>
<div class="ml" style="left:30.6px;top:111.1px"><span>69</span></div>
<div class="ml" style="left:86.8px;top:161.8px"><span>N/A</span></div>
<div class="ml" style="left:156.3px;top:196.0px"><span>70</span></div>
<div class="ml" style="left:160.3px;top:191.0px"><span>N/A</span></div>
<div class="ml" style="left:127.0px;top:193.5px"><span>N/A</span></div>
<div class="ml" style="left:141.9px;top:187.2px"><span>N/A</span></div>
<div class="ml" style="left:132.3px;top:174.5px"><span>28</span></div>
<div class="ml" style="left:118.7px;top:156.2px"><span>128</span></div>
<div class="ml" style="left:98.3px;top:206.5px"><span>79</span></div>
<div class="ml" style="left:73.9px;top:230.1px"><span>107</span></div>
<div class="ml" style="left:7.5px;top:243.0px"><span>144</span></div>
<div class="ml" style="left:97.0px;top:255.5px"><span>N/A</span></div>
<div class="ml" style="left:171.3px;top:135.1px"><span>83</span></div>
<div class="ml" style="left:213.2px;top:118.0px"><span>74</span></div>
<div class="ml" style="left:211.6px;top:131.7px"><span>88</span></div>
<div class="ml" style="left:204.8px;top:192.7px"><span>91</span></div>
<div class="ml" style="left:212.1px;top:150.8px"><span>251</span></div>
<div class="ml" style="left:221.2px;top:153.2px"><span>155</span></div>
<div class="ml" style="left:227.9px;top:154.1px"><span>158</span></div>
<div class="ml" style="left:232.5px;top:164.4px"><span>267</span></div>
<div class="ml" style="left:243.1px;top:177.0px"><span>222</span></div>
<div class="ml" style="left:232.5px;top:110.5px"><span>8</span></div>
<div class="ml" style="left:243.1px;top:108.9px"><span>142</span></div>
<div class="ml" style="left:356.5px;top:83.3px"><span>N/A</span></div>
<div class="ml" style="left:392.2px;top:124.5px"><span>157</span></div>
<div class="ml" style="left:419.3px;top:115.6px"><span>179</span></div>
<div class="ml" style="left:411.5px;top:166.1px"><span>56</span></div>
<div class="ml" style="left:380.1px;top:200.3px"><span>114</span></div>
<div class="ml" style="left:352.3px;top:208.7px"><span>168</span></div>
<div class="ml" style="left:340.0px;top:221.1px"><span>137</span></div>
<div class="ml" style="left:355.1px;top:248.9px"><span>157</span></div>
<div class="ml" style="left:314.9px;top:225.7px"><span>93</span></div>
<div class="ml" style="left:285.3px;top:202.1px"><span>254</span></div>
<div class="ml" style="left:293.8px;top:196.8px"><span>260</span></div>
<div class="ml" style="left:274.1px;top:180.2px"><span>N/A</span></div>
<div class="ml" style="left:227.2px;top:216.9px"><span>180</span></div>
<div class="ml" style="left:248.3px;top:222.8px"><span>172</span></div>
<div class="ml" style="left:255.3px;top:240.1px"><span>154</span></div>
<div class="ml" style="left:253.6px;top:262.0px"><span>63</span></div>
<div class="abs" style="left:214.5px;top:8.5px;width:107.5px;height:89.5px;background:#fff;border-radius:8px;box-shadow:0 2px 9px rgba(0,0,0,.4)"></div>
<div class="abs" style="left:242.4px;top:93px;width:10px;height:10px;background:#fff;transform:rotate(45deg);box-shadow:1px 1px 3px rgba(0,0,0,.25)"></div>
<div class="abs" style="left:214.5px;top:8.5px;width:107.5px;height:89.5px;background:#fff;border-radius:8px"></div>
<div class="abs" style="left:214.5px;top:19px;width:107.5px;text-align:center;font-size:9.4px;line-height:10.05px;color:#222;white-space:nowrap">Bishkek<br>2021-01-31 9:00 AM<br>(LT)</div>
<div class="abs" style="left:225px;top:49px;width:87px;height:38.5px;background:#004a82"></div>
<div class="abs" style="left:226px;top:67.5px;width:53.2px;height:19px;background:#fff"></div>
<div class="abs" style="left:280.2px;top:67.5px;width:30.8px;height:19px;background:#00e400"></div>
<div class="abs" style="left:225px;top:49px;width:55px;text-align:center;font-size:9.33px;line-height:19px;color:#fff;font-weight:bold">Pollutant</div>
<div class="abs" style="left:280px;top:49px;width:32px;text-align:center;font-size:9.33px;line-height:19px;color:#fff;font-weight:bold">AQI</div>
<div class="abs" style="left:226px;top:67.5px;width:53.2px;text-align:center;font-size:9.33px;line-height:19px;color:#333">PM2.5</div>
<div class="abs" style="left:280.2px;top:67.5px;width:30.8px;text-align:center;font-size:9.33px;line-height:19px;color:#222">8</div></div>

<div class="ph abs" style="top:3px">Select a City</div>
<div class="sel abs" style="top:27px">Bishkek<span class="abs" style="right:19px;top:0;text-indent:0;font-size:11px;color:#999;line-height:18.5px">×</span><span class="abs" style="right:7px;top:8.5px;width:0;height:0;border:3px solid transparent;border-top:3.5px solid #888;border-bottom:none"></span></div>
<div class="ph abs" style="top:66px">Select a Parameter</div>
<div class="sel abs" style="top:90px">PM2.5<span class="abs" style="right:19px;top:0;text-indent:0;font-size:11px;color:#999;line-height:18.5px">×</span><span class="abs" style="right:7px;top:8.5px;width:0;height:0;border:3px solid transparent;border-top:3.5px solid #888;border-bottom:none"></span></div>
<div class="abs" style="left:500px;top:128px;width:224px;height:49px;box-sizing:border-box;background:#fff;border:1px solid #ccc">
 <div class="abs" style="left:7px;top:6.7px;font-size:9.33px;font-weight:bold;color:#333;line-height:10px">Bishkek</div>
 <svg class="abs" style="left:192px;top:17px" width="23" height="23" viewBox="0 0 23 23">
<rect width="23" height="23" fill="#f2b63e"/>
<circle cx="4.9" cy="18" r="2.1" fill="#fff"/>
<path d="M3,10.4 A9.5,9.5 0 0 1 12.5,19.9" stroke="#fff" stroke-width="3" fill="none"/>
<path d="M3,4.5 A15.4,15.4 0 0 1 18.4,19.9" stroke="#fff" stroke-width="3" fill="none"/>
</svg>
</div>
<div id="note" class="abs">Note: Values above 500 are considered Beyond the AQI. Follow<br>recommendations for the Hazardous category. Additional information<br>on reducing exposure to extremely high levels of particle pollution is<br>available <b>here</b>.</div>

<div class="abs" style="left:11px;top:335px;width:713px;height:1px;background:#aaa"></div>
<div class="tab abs" style="left:11px;width:72px;background:#fff;border:1px solid #aaa;border-top:2px solid #004a82;border-bottom:none;height:21px;line-height:21px;color:#333">AQI</div>
<div class="tab abs" style="left:85px;width:111px">Concentration</div>
<div class="tab abs" style="left:198px;width:92px">Historical</div>
<div id="learn" class="abs">Learn more about how the Air Quality Index [AQI] is calculated from the EPA <b>here</b>.</div>

<div id="chart" class="abs"><svg class="abs" style="left:0;top:0" width="534" height="199" viewBox="0 0 534 199" font-family="DejaVu Sans, Verdana, sans-serif">
<text x="267" y="15.8" text-anchor="middle" font-size="12" fill="#333" letter-spacing="-0.2">Bishkek – PM2.5</text>
<path d="M50.3,163.3H527.2" stroke="#c0d0e0" stroke-width="1"/>
<text x="40.5" y="165.9" text-anchor="end" font-size="7" fill="#222">0</text>
<path d="M50.3,138.8H527.2" stroke="#e0e0e0" stroke-width="1"/>
<text x="40.5" y="141.4" text-anchor="end" font-size="7" fill="#222">100</text>
<path d="M50.3,114.2H527.2" stroke="#e0e0e0" stroke-width="1"/>
<text x="40.5" y="116.8" text-anchor="end" font-size="7" fill="#222">200</text>
<path d="M50.3,89.7H527.2" stroke="#e0e0e0" stroke-width="1"/>
<text x="40.5" y="92.3" text-anchor="end" font-size="7" fill="#222">300</text>
<path d="M50.3,65.2H527.2" stroke="#e0e0e0" stroke-width="1"/>
<text x="40.5" y="67.8" text-anchor="end" font-size="7" fill="#222">400</text>
<path d="M50.3,40.7H527.2" stroke="#e0e0e0" stroke-width="1"/>
<text x="40.5" y="43.3" text-anchor="end" font-size="7" fill="#222">500</text>
<path d="M50.3,163.3v6.5M70.2,163.3v6.5M90.0,163.3v6.5M109.9,163.3v6.5M129.8,163.3v6.5M149.7,163.3v6.5M169.5,163.3v6.5M189.4,163.3v6.5M209.3,163.3v6.5M229.1,163.3v6.5M249.0,163.3v6.5M268.9,163.3v6.5M288.7,163.3v6.5M308.6,163.3v6.5M328.5,163.3v6.5M348.4,163.3v6.5M368.2,163.3v6.5M388.1,163.3v6.5M408.0,163.3v6.5M427.8,163.3v6.5M447.7,163.3v6.5M467.6,163.3v6.5M487.4,163.3v6.5M507.3,163.3v6.5M527.2,163.3v6.5" stroke="#c0d0e0" stroke-width="1" fill="none"/>
<text transform="translate(19.5,99.5) rotate(-90)" text-anchor="middle" font-size="7" fill="#111">AQI</text>
<rect x="55.3" y="157.4" width="9.8" height="5.9" fill="#00e400" stroke="#444" stroke-width="1"/>
<rect x="75.2" y="156.3" width="9.8" height="7.0" fill="#00e400" stroke="#444" stroke-width="1"/>
<rect x="95.1" y="154.4" width="9.8" height="8.9" fill="#00e400" stroke="#444" stroke-width="1"/>
<rect x="114.9" y="154.4" width="9.8" height="8.9" fill="#00e400" stroke="#444" stroke-width="1"/>
<rect x="134.8" y="120.2" width="9.8" height="43.1" fill="#ff0000" stroke="#444" stroke-width="1"/>
<rect x="174.6" y="120.9" width="9.8" height="42.4" fill="#ff0000" stroke="#444" stroke-width="1"/>
<rect x="194.4" y="68.1" width="9.8" height="95.2" fill="#4c0026" stroke="#444" stroke-width="1"/>
<rect x="214.3" y="73.3" width="9.8" height="90.0" fill="#4c0026" stroke="#444" stroke-width="1"/>
<rect x="234.2" y="78.1" width="9.8" height="85.2" fill="#4c0026" stroke="#444" stroke-width="1"/>
<rect x="254.0" y="93.4" width="9.8" height="69.9" fill="#99004c" stroke="#444" stroke-width="1"/>
<rect x="273.9" y="112.7" width="9.8" height="50.6" fill="#99004c" stroke="#444" stroke-width="1"/>
<rect x="293.8" y="121.3" width="9.8" height="42.0" fill="#ff0000" stroke="#444" stroke-width="1"/>
<rect x="313.6" y="126.1" width="9.8" height="37.2" fill="#ff0000" stroke="#444" stroke-width="1"/>
<rect x="333.5" y="133.2" width="9.8" height="30.1" fill="#ff7e00" stroke="#444" stroke-width="1"/>
<rect x="353.4" y="142.2" width="9.8" height="21.1" fill="#ffff00" stroke="#444" stroke-width="1"/>
<rect x="373.3" y="146.2" width="9.8" height="17.1" fill="#ffff00" stroke="#444" stroke-width="1"/>
<rect x="393.1" y="148.9" width="9.8" height="14.4" fill="#ffff00" stroke="#444" stroke-width="1"/>
<rect x="413.0" y="153.0" width="9.8" height="10.3" fill="#00e400" stroke="#444" stroke-width="1"/>
<rect x="432.9" y="157.4" width="9.8" height="5.9" fill="#00e400" stroke="#444" stroke-width="1"/>
<rect x="452.7" y="160.4" width="9.8" height="2.9" fill="#00e400" stroke="#444" stroke-width="1"/>
<rect x="472.6" y="161.5" width="9.8" height="1.8" fill="#00e400" stroke="#444" stroke-width="1"/>
<rect x="492.5" y="162.8" width="9.8" height="0.5" fill="#00e400" stroke="#444" stroke-width="1"/>
<rect x="512.3" y="161.5" width="9.8" height="1.8" fill="#00e400" stroke="#444" stroke-width="1"/>
<text transform="translate(62.7,172.8) rotate(-45)" text-anchor="end" font-size="7" fill="#666">10 AM</text>
<text transform="translate(82.6,172.8) rotate(-45)" text-anchor="end" font-size="7" fill="#666">11 AM</text>
<text transform="translate(102.5,172.8) rotate(-45)" text-anchor="end" font-size="7" fill="#666">12 PM</text>
<text transform="translate(122.3,172.8) rotate(-45)" text-anchor="end" font-size="7" fill="#666">1 PM</text>
<text transform="translate(142.2,172.8) rotate(-45)" text-anchor="end" font-size="7" fill="#666">2 PM</text>
<text transform="translate(162.1,172.8) rotate(-45)" text-anchor="end" font-size="7" fill="#666">3 PM</text>
<text transform="translate(182.0,172.8) rotate(-45)" text-anchor="end" font-size="7" fill="#666">4 PM</text>
<text transform="translate(201.8,172.8) rotate(-45)" text-anchor="end" font-size="7" fill="#666">5 PM</text>
<text transform="translate(221.7,172.8) rotate(-45)" text-anchor="end" font-size="7" fill="#666">6 PM</text>
<text transform="translate(241.6,172.8) rotate(-45)" text-anchor="end" font-size="7" fill="#666">7 PM</text>
<text transform="translate(261.4,172.8) rotate(-45)" text-anchor="end" font-size="7" fill="#666">8 PM</text>
<text transform="translate(281.3,172.8) rotate(-45)" text-anchor="end" font-size="7" fill="#666">9 PM</text>
<text transform="translate(301.2,172.8) rotate(-45)" text-anchor="end" font-size="7" fill="#666">10 PM</text>
<text transform="translate(321.0,172.8) rotate(-45)" text-anchor="end" font-size="7" fill="#666">11 PM</text>
<text transform="translate(340.9,172.8) rotate(-45)" text-anchor="end" font-size="7" fill="#666">Jan 31, 2021 12 AM</text>
<text transform="translate(360.8,172.8) rotate(-45)" text-anchor="end" font-size="7" fill="#666">1 AM</text>
<text transform="translate(380.7,172.8) rotate(-45)" text-anchor="end" font-size="7" fill="#666">2 AM</text>
<text transform="translate(400.5,172.8) rotate(-45)" text-anchor="end" font-size="7" fill="#666">3 AM</text>
<text transform="translate(420.4,172.8) rotate(-45)" text-anchor="end" font-size="7" fill="#666">4 AM</text>
<text transform="translate(440.3,172.8) rotate(-45)" text-anchor="end" font-size="7" fill="#666">5 AM</text>
<text transform="translate(460.1,172.8) rotate(-45)" text-anchor="end" font-size="7" fill="#666">6 AM</text>
<text transform="translate(480.0,172.8) rotate(-45)" text-anchor="end" font-size="7" fill="#666">7 AM</text>
<text transform="translate(499.9,172.8) rotate(-45)" text-anchor="end" font-size="7" fill="#666">8 AM</text>
<text transform="translate(519.7,172.8) rotate(-45)" text-anchor="end" font-size="7" fill="#666">9 AM</text>
</svg></div>
<div id="cc" class="abs"><div class="abs" style="left:0;top:0;width:166px;height:49.5px;background:#004a82;color:#fff;text-align:center;font-weight:bold">
<div class="abs" style="left:0;width:166px;top:4.3px;font-size:10px;line-height:12px">Current Conditions</div>
<div class="abs" style="left:0;width:166px;top:17.8px;font-size:8px;line-height:12px">observed at</div>
<div class="abs" style="left:0;width:166px;top:32.3px;font-size:10px;line-height:12px">Jan 31, 2021 9:00 AM (LT)</div>
</div>
<div class="abs" style="left:0;top:49.5px;width:166px;height:77px;background:#00e400;color:#000;text-align:center;font-size:13.33px;line-height:19.1px;-webkit-text-stroke:.3px #000">
<div style="padding-top:8.6px">8 AQI<br>Good<br>PM2.5</div></div>
<div class="abs" style="left:0;width:166px;top:132px;font-size:8px;line-height:12px;font-weight:bold;text-align:center;color:#222">Health Message</div>
<div class="abs" style="left:3px;top:147px;font-size:8px;line-height:14px;color:#555;white-space:nowrap">The AQI value for your community is<br>between 0 and 50. Air quality is satisfactory<br>and poses little or no health risk.</div></div>
</body></html>
